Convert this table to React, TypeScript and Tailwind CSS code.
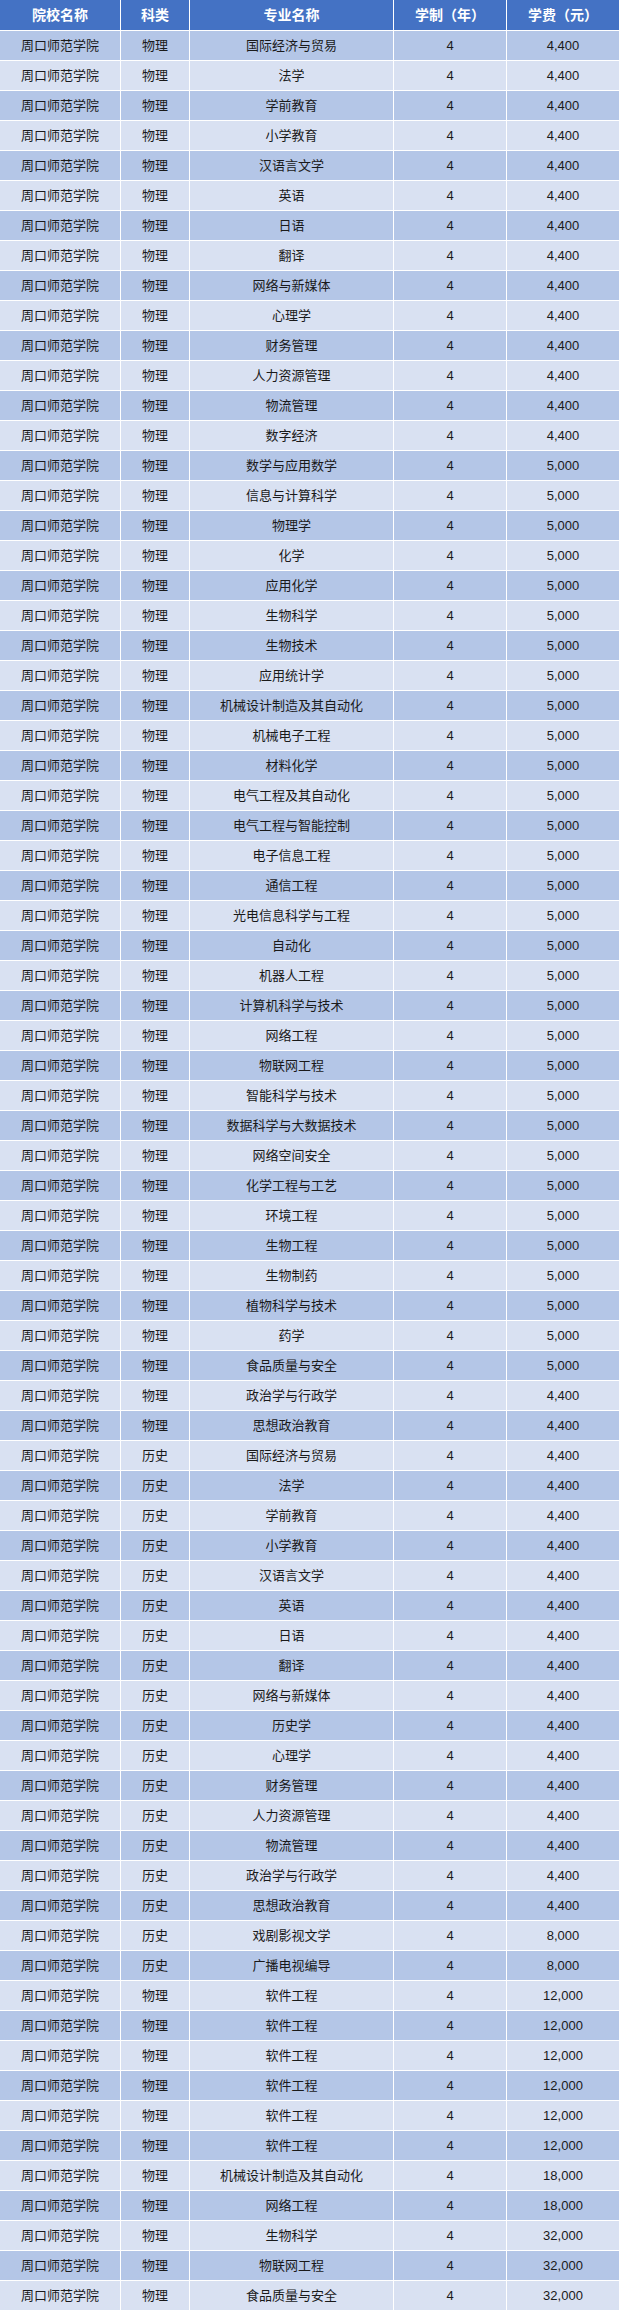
const PHYSICS_1: [string, string][] = [
  ['国际经济与贸易', '4,400'],
  ['法学', '4,400'],
  ['学前教育', '4,400'],
  ['小学教育', '4,400'],
  ['汉语言文学', '4,400'],
  ['英语', '4,400'],
  ['日语', '4,400'],
  ['翻译', '4,400'],
  ['网络与新媒体', '4,400'],
  ['心理学', '4,400'],
  ['财务管理', '4,400'],
  ['人力资源管理', '4,400'],
  ['物流管理', '4,400'],
  ['数字经济', '4,400'],
  ['数学与应用数学', '5,000'],
  ['信息与计算科学', '5,000'],
  ['物理学', '5,000'],
  ['化学', '5,000'],
  ['应用化学', '5,000'],
  ['生物科学', '5,000'],
  ['生物技术', '5,000'],
  ['应用统计学', '5,000'],
  ['机械设计制造及其自动化', '5,000'],
  ['机械电子工程', '5,000'],
  ['材料化学', '5,000'],
  ['电气工程及其自动化', '5,000'],
  ['电气工程与智能控制', '5,000'],
  ['电子信息工程', '5,000'],
  ['通信工程', '5,000'],
  ['光电信息科学与工程', '5,000'],
  ['自动化', '5,000'],
  ['机器人工程', '5,000'],
  ['计算机科学与技术', '5,000'],
  ['网络工程', '5,000'],
  ['物联网工程', '5,000'],
  ['智能科学与技术', '5,000'],
  ['数据科学与大数据技术', '5,000'],
  ['网络空间安全', '5,000'],
  ['化学工程与工艺', '5,000'],
  ['环境工程', '5,000'],
  ['生物工程', '5,000'],
  ['生物制药', '5,000'],
  ['植物科学与技术', '5,000'],
  ['药学', '5,000'],
  ['食品质量与安全', '5,000'],
  ['政治学与行政学', '4,400'],
  ['思想政治教育', '4,400'],
]

const HISTORY: [string, string][] = [
  ['国际经济与贸易', '4,400'],
  ['法学', '4,400'],
  ['学前教育', '4,400'],
  ['小学教育', '4,400'],
  ['汉语言文学', '4,400'],
  ['英语', '4,400'],
  ['日语', '4,400'],
  ['翻译', '4,400'],
  ['网络与新媒体', '4,400'],
  ['历史学', '4,400'],
  ['心理学', '4,400'],
  ['财务管理', '4,400'],
  ['人力资源管理', '4,400'],
  ['物流管理', '4,400'],
  ['政治学与行政学', '4,400'],
  ['思想政治教育', '4,400'],
  ['戏剧影视文学', '8,000'],
  ['广播电视编导', '8,000'],
]

const PHYSICS_2: [string, string][] = [
  ['软件工程', '12,000'],
  ['软件工程', '12,000'],
  ['软件工程', '12,000'],
  ['软件工程', '12,000'],
  ['软件工程', '12,000'],
  ['软件工程', '12,000'],
  ['机械设计制造及其自动化', '18,000'],
  ['网络工程', '18,000'],
  ['生物科学', '32,000'],
  ['物联网工程', '32,000'],
  ['食品质量与安全', '32,000'],
]

const ROWS = [
  ...PHYSICS_1.map(([major, fee]) => ({ kind: '物理', major, fee })),
  ...HISTORY.map(([major, fee]) => ({ kind: '历史', major, fee })),
  ...PHYSICS_2.map(([major, fee]) => ({ kind: '物理', major, fee })),
]

const HEADERS = ['院校名称', '科类', '专业名称', '学制（年）', '学费（元）']

export default function App() {
  return (
    <div
      className="w-[619px] bg-white text-[13px] text-[#1a1a1a]"
      style={{ fontFamily: '"Liberation Sans", "Noto Sans CJK SC", sans-serif' }}
    >
      <div className="grid grid-cols-[120px_68px_203px_112px_112px] gap-px bg-white">
        {HEADERS.map((h) => (
          <div
            key={h}
            className="h-[30px] bg-[#4472c4] flex items-center justify-center text-[14px] font-bold text-white"
          >
            {h}
          </div>
        ))}
        {ROWS.map((r, i) => {
          const bg = i % 2 === 0 ? 'bg-[#b4c6e7]' : 'bg-[#d9e1f2]'
          return [
            <div key={`a${i}`} className={`h-[29px] flex items-center justify-center ${bg}`}>
              周口师范学院
            </div>,
            <div key={`b${i}`} className={`h-[29px] flex items-center justify-center ${bg}`}>
              {r.kind}
            </div>,
            <div key={`c${i}`} className={`h-[29px] flex items-center justify-center ${bg}`}>
              {r.major}
            </div>,
            <div key={`d${i}`} className={`h-[29px] flex items-center justify-center ${bg}`}>
              4
            </div>,
            <div key={`e${i}`} className={`h-[29px] flex items-center justify-center ${bg}`}>
              {r.fee}
            </div>,
          ]
        })}
      </div>
    </div>
  )
}
